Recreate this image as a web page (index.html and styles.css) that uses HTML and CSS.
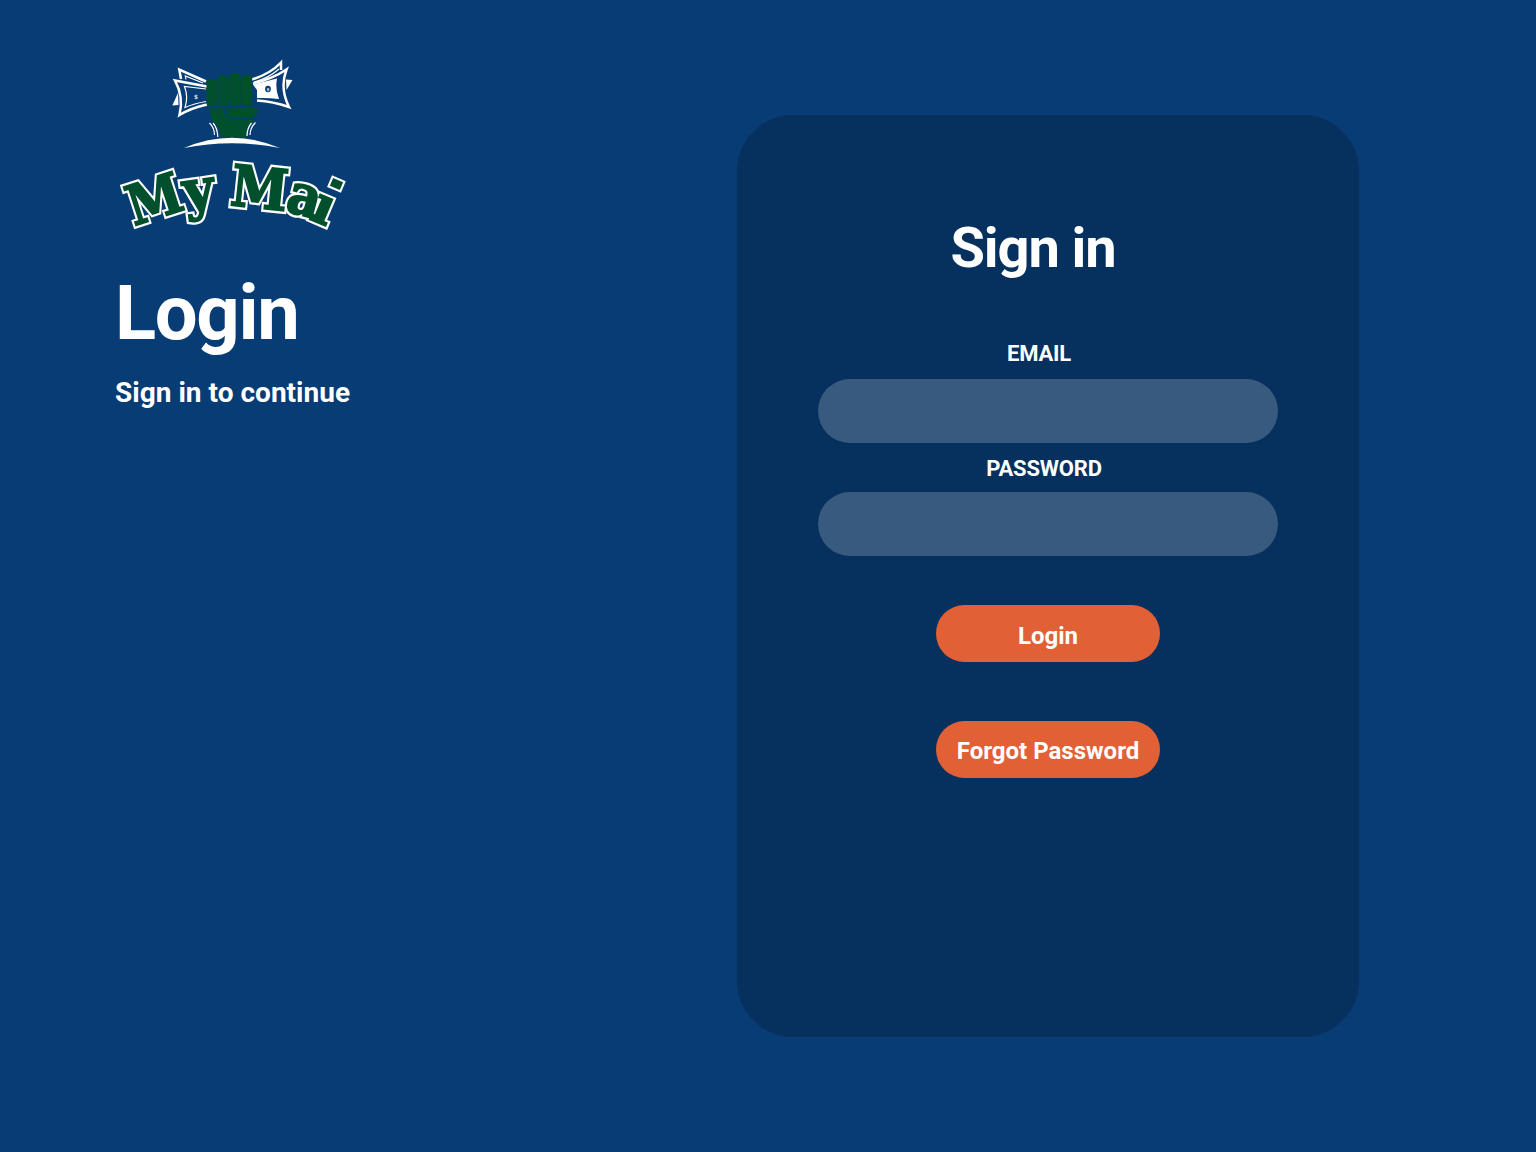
FILE: index.html
```html
<!DOCTYPE html>
<html lang="en">
<head>
<meta charset="utf-8">
<title>My Mai – Login</title>
<link rel="stylesheet" href="styles.css">
</head>
<body>
<main class="page">
  <section class="intro">
    <svg class="logo" viewBox="115 55 235 180" role="img" aria-label="My Mai">
      <g class="bills">
        <path class="bill" d="M181 79 L179.300 69.500 L206 81.500"/>
        <path class="bill-thin" d="M186 79.500 L185.300 76 L203 83"/>
        <path class="bill" d="M207 86.500 L175 80.500 Q184 97 179.500 115 Q191 108 207 104.500"/>
        <path class="bill-thin" d="M206 89 L184.500 86.500 Q188.500 97 185 107.500 Q194 103.500 206 101.500"/>
        <path class="bill-fill" d="M178 93 L172.300 105.500 L178.500 105Z"/>
        <path class="bill" d="M252 79.500 Q270 74 281 62.500 L281 70"/>
        <path class="bill-thin" d="M254 82 Q268 78.500 279 69"/>
        <path class="bill" d="M253 83.500 Q272 79 286.500 69.500 Q279.500 88 289 107 Q273 101.500 257 100.500"/>
        <path class="bill-fill" d="M253 84.500 L277 78.500 Q275 89 279 99 Q268 97.500 257 98 L257 90Z"/>
        <path class="bill-fill" d="M286 79.500 L292.500 80 L286.500 90Z"/>
        <ellipse class="coin" cx="268" cy="89" rx="2.900" ry="3.300"/>
        <text class="dollar" x="194.300" y="98.500">$</text>
        <text class="dollar dollar-small" x="266.700" y="91">$</text>
      </g>
      <g class="fist">
        <path d="M209 108.500 L223 107.500 Q224 118 232 119.500 L255 120 Q247 125 247 131 L248 137.500 L221 137.500 Q221 128 212 121Z"/>
        <rect x="206.500" y="79.200" width="10.600" height="27" rx="3"/>
        <rect x="218.300" y="75.300" width="10.500" height="30.700" rx="3"/>
        <rect x="230" y="73" width="10.700" height="32.500" rx="3"/>
        <rect x="241.900" y="75" width="10.300" height="30.500" rx="3"/>
        <path class="thumb" d="M224.500 107.200 Q240 108.500 250 106.300 Q256 106.500 259.300 110 Q257 115 253 118.700 L231 118.700 Q225 115.500 224.500 107.200Z"/>
      </g>
      <path class="wrist" d="M209.500 123 Q214.500 128 214.500 135 M213 123 Q217.500 128 217.800 137 M255.500 122.500 Q250 128 250 135 M251.500 123 Q247 128 247 136"/>
      <path class="ground" d="M184 148 Q232 127.500 280 148 Q232 138.500 184 148Z"/>
      <defs>
        <g id="letters">
          <text transform="translate(134 226) rotate(-18) scale(.96 1.060)">M</text>
          <text transform="translate(185.500 210.500) rotate(-8) scale(1.030 1.060)">y</text>
          <text transform="translate(229.300 205) rotate(6) scale(.99 1.090)">M</text>
          <text transform="translate(284 210.500) rotate(15) scale(1 1.080)">a</text>
          <text transform="translate(308 218.500) rotate(23) scale(1.030 1)">ı</text>
          <rect x="332" y="180.800" width="9" height="6.600" transform="rotate(23 336.500 184)"/>
        </g>
      </defs>
      <use class="wordmark-outline" href="#letters"/>
      <use class="wordmark-fill" href="#letters"/>
    </svg>
    <h1 class="title">Login</h1>
    <p class="subtitle">Sign in to continue</p>
  </section>
  <form class="card">
    <h2 class="heading">Sign in</h2>
    <label class="label email" for="email">EMAIL</label>
    <input class="field" id="email" type="email">
    <label class="label password" for="password">PASSWORD</label>
    <input class="field" id="password" type="password">
    <button class="button login" type="button">Login</button>
    <button class="button forgot" type="button">Forgot Password</button>
  </form>
</main>
</body>
</html>
```
FILE: styles.css
```css
* { box-sizing: border-box; }
body {
  margin: 0;
  background: #083c75;
  color: #fff;
  font-family: Roboto, sans-serif;
  font-weight: 700;
}
.page {
  display: flex;
  justify-content: space-between;
  height: 1152px;
  padding: 55px 177px 0 115px;
}
.logo { display: block; width: 235px; height: 180px; overflow: visible; }
.title {
  margin: 33px 0 0;
  font-size: 76px;
  line-height: 90px;
  letter-spacing: -1.350px;
}
.subtitle {
  margin: 18px 0 0;
  font-size: 28px;
  line-height: 33px;
  letter-spacing: .020px;
}
.card {
  display: flex;
  flex-direction: column;
  align-items: center;
  width: 622px;
  height: 921.500px;
  margin-top: 60px;
  padding-top: 100px;
  border-radius: 56px;
  background: #06305d;
}
.heading {
  margin: 0 30px 0 0;
  font-size: 56px;
  line-height: 66px;
  letter-spacing: -1.120px;
}
.label { font-size: 22px; line-height: 26px; letter-spacing: -.200px; }
.email { margin: 60px 18px 11.500px 0; }
.password { margin: 13.500px 8px 10px 0; }
.field {
  width: 460px;
  height: 64px;
  padding: 0 32px;
  border: 0;
  border-radius: 32px;
  background: #385a7e;
  color: inherit;
  font: inherit;
}
.button {
  width: 224px;
  height: 57px;
  padding: 4px 0 0;
  border: 0;
  border-radius: 28.500px;
  background: #e16036;
  color: inherit;
  font: inherit;
  font-size: 24px;
  line-height: 28px;
  white-space: nowrap;
}
.login { margin-top: 49px; padding-top: 5px; }
.forgot { margin-top: 59px; height: 56.500px; }
.bill { fill: none; stroke: #fff; stroke-width: 2.500; }
.bill-thin { fill: none; stroke: #fff; stroke-width: 1.200; }
.bill-fill { fill: #fff; }
.coin { fill: #083c75; }
.dollar { fill: #fff; font: 700 7px "Liberation Serif", serif; }
.dollar-small { font-size: 5px; }
.fist { fill: #00502d; }
.thumb { stroke: #083c75; stroke-width: .900; }
.wrist { fill: none; stroke: #fff; stroke-width: 1.200; }
.ground { fill: #fff; }
.wordmark-outline,
.wordmark-fill { font: 700 52px "DejaVu Serif", serif; }
.wordmark-outline { fill: #fff; stroke: #fff; stroke-width: 6px; }
.wordmark-fill { fill: #00502d; stroke: #00502d; stroke-width: 1.800px; }
```
